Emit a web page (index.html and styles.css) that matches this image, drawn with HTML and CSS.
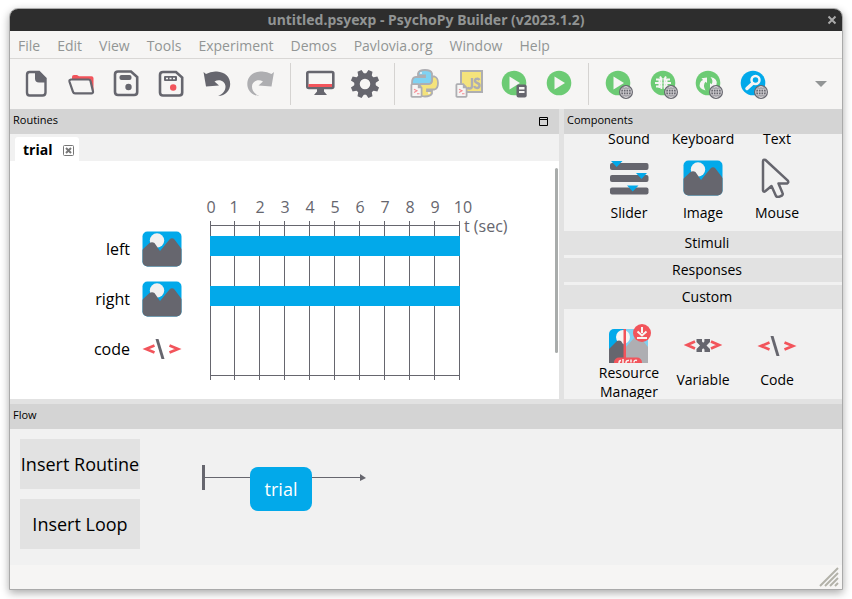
FILE: index.html
```html
<!DOCTYPE html>
<html lang="en">
<head>
<meta charset="utf-8">
<title>untitled.psyexp - PsychoPy Builder (v2023.1.2)</title>
<link rel="stylesheet" href="styles.css">
</head>
<body>
<svg class="defs" aria-hidden="true">
  <defs>
    <g id="globe">
      <circle r="7" fill="#66666e"/>
      <g fill="none" stroke="#d5d3d6" stroke-width="0.9"><circle r="5.4"/><ellipse rx="2.7" ry="5.4"/><path d="M0-5.4V5.4M-5.4 0H5.4M-4.5-2.8H4.5M-4.5 2.8H4.5"/></g>
    </g>
    <g id="script">
      <path d="M1.2 1.2h6l3.4 3.6v8.2q0 .8-.8.8H1.2q-.8 0-.8-.8V2q0-.8.8-.8z" fill="#f6f5f4" stroke="#aeaeb2" stroke-width="1.8"/>
      <path d="M6.8 1v4.2h4z" fill="#aeaeb2"/><path d="M3 6.2l3 1.6-3 1.6M6 10.8h2.5" fill="none" stroke="#f58b92" stroke-width="1.1"/>
    </g>
    <symbol id="image" viewBox="0 0 40 36">
      <clipPath id="frame"><rect x=".5" y=".5" width="39" height="35" rx="5"/></clipPath>
      <g clip-path="url(#frame)"><path fill="#02a9ea" d="M0 0h40v36H0z"/><circle cx="15" cy="9.500" r="7.200" fill="#f1f1f1"/><path fill="#66666e" d="M0 19L7.500 12q2.500-1.600 5 0l5.500 8L27.500 8.500q2.500-2.500 5 0L40 18.500V36H0z"/></g>
    </symbol>
    <symbol id="code" viewBox="0 0 40 24">
      <path d="M12.500 8.500L4 12l8.500 3.500M27.500 8.500L36 12l-8.500 3.500" fill="none" stroke="#f2545b" stroke-width="2.700"/>
      <path d="M13.500 2h3l6 20h-3z" fill="#66666e"/>
    </symbol>
  </defs>
</svg>
<main class="window">
  <header class="titlebar"><h1>untitled.psyexp - PsychoPy Builder (v2023.1.2)</h1><button class="close" aria-label="Close"><svg viewBox="0 0 10 10"><path d="M1.500 1.500l7 7m0-7l-7 7"/></svg></button></header>
  <nav class="menu"><button>File</button><button>Edit</button><button>View</button><button>Tools</button><button>Experiment</button><button>Demos</button><button>Pavlovia.org</button><button>Window</button><button>Help</button></nav>
  <div class="toolbar">
    <div class="tools">
      <button aria-label="New"><svg viewBox="0 0 45 50"><path d="M15.500 13h9.500l6.500 6.500v14q0 3-3 3h-13q-2.500 0-2.500-3v-17.500q0-3 2.500-3z" fill="none" stroke="#66666e" stroke-width="2.400"/><path d="M21 12.500h4.500l6.500 7v4h-7q-4 0-4-4z" fill="#66666e"/></svg></button>
      <button aria-label="Open"><svg viewBox="0 0 45 50"><path d="M13 20v-2q0-2 2-2h3l2 1.200h12.500q2 0 2 2V34L31 21z" fill="#f2545b"/><path d="M12 20.500h17.500q1.500 0 2 1.500l2.500 10.500q.2 1.800-1.500 1.800H16q-1.500 0-2-1.500l-3.500-10q-.5-2 1.500-2.300z" fill="#f6f5f4" stroke="#66666e" stroke-width="2.200"/></svg></button>
      <button aria-label="Save"><svg viewBox="0 0 45 50"><path d="M14 12.500h13l6.200 5.500v15q0 3-3 3H14q-3 0-3-3V15.500q0-3 3-3z" fill="none" stroke="#66666e" stroke-width="2.600"/><rect x="15.500" y="16" width="12" height="5" rx="2" fill="#66666e"/><circle cx="24.500" cy="28" r="3.200" fill="#66666e"/></svg></button>
      <button aria-label="Save as"><svg viewBox="0 0 45 50"><path d="M14 13h13l6.200 5.500v15q0 3-3 3H14q-3 0-3-3V16q0-3 3-3z" fill="none" stroke="#66666e" stroke-width="2.600"/><rect x="15" y="17" width="13" height="5" rx="1" fill="#66666e"/><path d="M17 19.500h2m1.500 0h2m1.500 0h2" stroke="#f6f5f4" stroke-width="1.600"/><circle cx="24.200" cy="28.500" r="3.200" fill="#f2545b"/></svg></button>
      <button aria-label="Undo"><svg viewBox="0 0 45 50"><path d="M9.500 13l2.500 2q5-3 11-2.500c8 .5 13.200 5.500 13.200 12.500 0 6-4.500 12-12.200 12 5-2 7.500-5.500 7.500-9.500 0-5-6-8-11-5l4.500 4-13 1z" fill="#66666e"/></svg></button>
      <button aria-label="Redo" disabled><svg viewBox="0 0 45 50"><path d="M35 13l-2.500 2q-5-3-11-2.500c-8 .5-13.200 5.500-13.200 12.500 0 6 4.500 12 12.200 12-5-2-7.500-5.500-7.500-9.500 0-5 6-8 11-5l-4.500 4 13 1z" fill="#aeaeb1"/></svg></button>
    </div>
    <div class="tools">
      <button aria-label="Monitor center"><svg viewBox="0 0 45 50"><rect x="9.300" y="13" width="26" height="16" rx="1.500" fill="#f6f5f4" stroke="#66666e" stroke-width="2.600"/><path d="M10.500 25h23.500v3H10.500z" fill="#f2545b"/><path d="M19 29h7v3.500l3 3.500H16l3-3.500z" fill="#66666e"/></svg></button>
      <button aria-label="Settings"><svg viewBox="0 0 45 50"><g transform="translate(22 25)"><circle r="8" fill="none" stroke="#66666e" stroke-width="5.500"/><g fill="#66666e"><path id="cog" d="M-3.200-9.500l1-4.800h4.400l1 4.800zM-3.200 9.500l1 4.800h4.400l1-4.800z" transform="rotate(22.500)"/><use href="#cog" transform="rotate(45)"/><use href="#cog" transform="rotate(90)"/><use href="#cog" transform="rotate(135)"/></g></g></svg></button>
    </div>
    <div class="tools">
      <button aria-label="Compile to Python" disabled><svg viewBox="0 0 45 50"><g stroke="#aeaeb2" stroke-width="1.800"><path d="M30 17.500h2.500q3.500 1 3.500 6.500t-3.500 6.500H25v1.500h5v2.500q-1.500 3-7 3t-7-3.500V29q0-4 4-4h6q4 0 4-4z" fill="#f4e37c"/><path d="M16 18.500v-4q1-3.500 7-3.500t7 3.500V21q0 4-4 4h-6q-4 0-4 4v1.500h-2.500Q10 30 10 24t4-6h9v-1.500h-7z" fill="#7fd2f2"/></g><circle cx="19" cy="14" r="1" fill="#f6f5f4"/><circle cx="27" cy="34" r="1" fill="#f6f5f4"/><use href="#script" x="9" y="24"/></svg></button>
      <button aria-label="Compile to JS" disabled><svg viewBox="0 0 45 50"><rect x="14" y="12" width="21" height="21" fill="#f4e37c" stroke="#aeaeb2" stroke-width="2"/><path d="M25 19v8q0 2.500-2.500 2.500-1.500 0-2.200-1M32.500 21q-1-1.500-2.500-1.200-2 .2-2 2 0 1.500 2.300 2.200 2.400.8 2.200 2.800-.2 2-2.500 2.200-2 0-3-1.800" fill="none" stroke="#aeaeb2" stroke-width="2.400"/><use href="#script" x="9" y="24"/></svg></button>
      <button aria-label="Send to runner"><svg viewBox="0 0 45 50"><circle cx="22" cy="24" r="12.300" fill="#6ccb74"/><path d="M17.500 17.500L28 24l-10.500 6.500z" fill="#f6f5f4"/><rect x="24.500" y="25.500" width="10.200" height="13" rx="2" fill="#66666e"/><path d="M27 28h5.500v2.500H27zM27 32h5.500v2H27z" fill="#f6f5f4"/></svg></button>
      <button aria-label="Run"><svg viewBox="0 0 45 50"><circle cx="22" cy="24" r="12.300" fill="#6ccb74"/><path d="M17.500 17.500L28 24l-10.500 6.500z" fill="#f6f5f4"/></svg></button>
    </div>
    <div class="tools">
      <button aria-label="Run online"><svg viewBox="0 0 45 50"><circle cx="22" cy="24" r="12.300" fill="#6ccb74"/><path d="M17.500 17.500L28 24l-10.500 6.500z" fill="#f6f5f4"/><use href="#globe" x="30" y="33"/></svg></button>
      <button aria-label="Debug online"><svg viewBox="0 0 45 50"><circle cx="22" cy="24" r="12.300" fill="#6ccb74"/><g fill="none" stroke="#f6f5f4" stroke-width="2"><path d="M15 20.500h14M14 24h16M15 27.500h14M19 17.500l1.500 2.500v10M25 17.500L23.500 20v10"/><path d="M18.500 20v9M25.500 20v9"/></g><path d="M22 20v12" stroke="#6ccb74"/><use href="#globe" x="30" y="33"/></svg></button>
      <button aria-label="Sync"><svg viewBox="0 0 45 50"><circle cx="22" cy="24" r="12.300" fill="#6ccb74"/><path d="M19.500 31.500q-7.500-2-5.500-7.500 1-2.500 3-3l-1.500-1.800 5.500-.7v5.500l-1.500-1.300q-3 3.300 0 8.800zM24.500 18q7.500 1.500 6 7.500-.8 2.500-3 4h-3.500v-5.500l1.500 1.300q2.300-3.300-1-7.300z" fill="#f6f5f4"/><use href="#globe" x="30" y="33"/></svg></button>
      <button aria-label="Search Pavlovia"><svg viewBox="0 0 45 50"><circle cx="22" cy="24" r="12.300" fill="#02a9ea"/><circle cx="24.500" cy="21" r="4" fill="none" stroke="#f6f5f4" stroke-width="2.500"/><path d="M21.500 24.500L16 29.500" stroke="#f6f5f4" stroke-width="3.500" stroke-linecap="round"/><use href="#globe" x="30" y="33"/></svg></button>
    </div>
    <button class="more" aria-label="More tools"><svg viewBox="0 0 12 6"><path d="M0 0h12L6 6z"/></svg></button>
  </div>
  <div class="panes">
    <section class="routines">
      <h2 class="caption">Routines<button aria-label="Maximize"><svg viewBox="0 0 9 9"><path d="M.5.5h8v8h-8zM0 2.500h9"/></svg></button></h2>
      <div class="tabs"><div class="tab"><span>trial</span><button aria-label="Close tab"><svg viewBox="0 0 11 11"><rect x=".5" y=".5" width="10" height="10" rx="1"/><path d="M3 3l5 5m0-5L3 8" stroke-width="2"/></svg></button></div></div>
      <div class="canvas">
        <ul class="rows">
          <li>left<svg class="picture"><use href="#image"/></svg></li>
          <li>right<svg class="picture"><use href="#image"/></svg></li>
          <li>code<svg class="markup"><use href="#code"/></svg></li>
        </ul>
        <svg class="timeline" viewBox="0 0 320 190" role="img" aria-label="Timeline in seconds">
          <path d="M10.500 31v159M34.500 31v159M59.500 31v159M84.500 31v159M109.500 31v159M134.500 31v159M159.500 31v159M184.500 31v159M209.500 31v159M234.500 31v159M259.500 31v159M10 35.500h250M10 185.500h250"/>
          <rect x="10" y="46" width="250" height="20"/><rect x="10" y="96" width="250" height="20"/>
          <g class="ticks"><text x="11" y="23">0</text><text x="34" y="23">1</text><text x="60" y="23">2</text><text x="85" y="23">3</text><text x="110" y="23">4</text><text x="135" y="23">5</text><text x="160" y="23">6</text><text x="185" y="23">7</text><text x="210" y="23">8</text><text x="235" y="23">9</text><text x="263" y="23">10</text></g>
          <text x="264" y="42">t (sec)</text>
        </svg>
        <div class="scrollbar"></div>
      </div>
    </section>
    <section class="components">
      <h2 class="caption">Components</h2>
      <div class="row clipped"><button>Sound</button><button>Keyboard</button><button>Text</button></div>
      <div class="row">
        <button><svg viewBox="0 0 40 40"><g fill="#66666e"><rect x="1" y="5" width="38.500" height="7" rx="2"/><rect x="1" y="17" width="38.500" height="7" rx="2"/><rect x="1" y="29.500" width="38.500" height="7" rx="2"/></g><path d="M2 3h11.500L7.700 9zM27 15h11l-5.500 6zM18 27.500h11.500l-5.800 6z" fill="#02a9ea"/></svg>Slider</button>
        <button><svg><use href="#image" y="2" width="40" height="36"/></svg>Image</button>
        <button><svg viewBox="0 0 40 40"><path d="M8.500 2q-2.500-1.200-2.500 1.500v29q.5 2 2.500.5l6-5 4.500 10q1 1.500 3 .8l3-1.300q1.200-1 .5-2.500L21.500 25.500h8.500q2-.8.8-2.800z" fill="none" stroke="#66666e" stroke-width="2.500" stroke-linejoin="round"/></svg>Mouse</button>
      </div>
      <button class="category">Stimuli</button>
      <button class="category">Responses</button>
      <button class="category">Custom</button>
      <div class="row custom">
        <button class="resource"><svg viewBox="-2 0 44 40"><clipPath id="resource"><rect y="6" width="39" height="40" rx="5"/></clipPath><g clip-path="url(#resource)"><path fill="#02a9ea" d="M0 5h16v35H0z"/><path fill="#7fd2f2" d="M16 5h24v35H16z"/><circle cx="14" cy="14" r="7" fill="#f6f5f4"/><path fill="#66666e" d="M0 26L8 18q2-1 4 0l4 6v16H0z"/><path fill="#aeaeb2" d="M16 25l10-11q2-2 5 0l8 10v16H16z"/></g><path d="M14.500 6h2.500v31h-2.500z" fill="#f2545b"/><rect x="5" y="34.500" width="28" height="12" rx="5" fill="#f2545b"/><path d="M10 40q0-2.500 2-2.500m2-1.500v4m3 0q0-3 3-2.500m2-1v3m3 0q0-3 3-2" fill="none" stroke="#f6f5f4" stroke-width="1.500"/><circle cx="33" cy="10" r="9" fill="#f2545b"/><path d="M33 4v6m-4.500-1.500l4.500 4 4.500-4M28 15h10" fill="none" stroke="#f6f5f4" stroke-width="2"/></svg>Resource Manager</button>
        <button><svg viewBox="0 0 40 40"><path d="M12 15.500L4 19l8 3.500M28 15.500L36 19l-8 3.500" fill="none" stroke="#f2545b" stroke-width="2.700"/><path d="M13.500 13h5.500v2.500l1.200 1.200 1.200-1.200V13H27v3L23.500 19.500 27 23v3h-5.500v-2.500l-1.300-1.200-1.200 1.200V26h-5.500v-3l3.500-3.500-3.500-3.500z" fill="#66666e"/></svg>Variable</button>
        <button><svg><use href="#code" y="8" width="40" height="24"/></svg>Code</button>
      </div>
    </section>
  </div>
  <section class="flow">
    <h2 class="caption">Flow</h2>
    <div class="flow-body">
      <div class="inserts"><button>Insert Routine</button><button>Insert Loop</button></div>
      <div class="track"><i class="start"></i><i class="line lead"></i><button class="routine">trial</button><i class="line tail"></i><i class="arrow"></i></div>
    </div>
  </section>
  <footer><svg viewBox="0 0 20 20"><path d="M1 19L19 1M6 19L19 6M11 19l8-8M16 19l3-3"/></svg></footer>
</main>
</body>
</html>
```
FILE: styles.css
```css
* { box-sizing: border-box; }
body {
  margin: 0;
  padding: 8px 9px 9px;
  height: 100vh;
  background: #fff;
  color: #000;
  font: 14px/20px "Open Sans", "Noto Sans", sans-serif;
  overflow: hidden;
}
button { margin: 0; padding: 0; border: 0; background: none; color: inherit; font: inherit; }
svg { display: block; }
.defs { position: absolute; width: 0; height: 0; }
.window {
  height: 100%;
  display: flex;
  flex-direction: column;
  border: 1px solid #aaa;
  border-radius: 9px 9px 0 0;
  background: #f6f5f4;
  box-shadow: 0 3px 9px #0005;
  overflow: hidden;
}
.titlebar { height: 22px; flex: none; display: flex; align-items: center; background: #2d2d2d; color: #919494; padding: 0 5px 0 15px; }
h1 { flex: 1; margin: 0; text-align: center; font: bold 14px/22px "Noto Sans", sans-serif; }
.close svg { width: 10px; height: 10px; fill: none; stroke: #aaa; stroke-width: 2; }
.menu { height: 28px; flex: none; display: flex; gap: 17px; padding: 2px 8px 0; border-bottom: 1px solid #d9d7d5; color: #929595; }
.toolbar { height: 50px; flex: none; display: flex; padding: 0 15px 0 4px; }
.tools { display: flex; }
.tools button, .tools svg { width: 45px; height: 50px; }
.tools + .tools::before { content: ""; width: 1px; height: 42px; margin: 4px 7px 4px 6px; background: #d5d3d1; }
.more { margin-left: auto; }
.more svg { width: 12px; height: 6px; fill: #929595; }
.panes { flex: 1; min-height: 0; display: grid; grid-template-columns: minmax(0, 549fr) minmax(0, 278fr); gap: 5px; background: #e2e2e2; }
.routines, .components { min-height: 0; display: flex; flex-direction: column; background: #f1f1f1; overflow: hidden; }
.caption { height: 25px; flex: none; margin: 0; padding: 0 11px 3px 3px; display: flex; align-items: center; justify-content: space-between; background: #d4d4d4; font-size: 11px; font-weight: normal; }
.caption svg { width: 9px; height: 9px; margin-top: 2px; fill: none; stroke: #000; }
.tabs { height: 27px; flex: none; padding: 3px 5px 0; }
.tab { width: 64px; height: 24px; display: flex; align-items: center; justify-content: space-between; padding: 2px 5px 0 8px; border-radius: 3px 3px 0 0; background: #fff; font-weight: bold; }
.tab svg { width: 11px; height: 11px; fill: none; stroke: #777; }
.canvas { flex: 1; min-height: 0; display: flex; padding: 7px 1px 0 0; background: #fff; }
.rows { width: 172px; margin: 0; padding: 56px 0 0; list-style: none; font-size: 16px; }
.rows li { height: 50px; display: flex; align-items: center; justify-content: flex-end; gap: 12px; }
.picture { width: 40px; height: 36px; }
.markup { width: 40px; height: 24px; }
.timeline { width: 320px; height: 190px; margin: 22px 0 0 18px; font-size: 16px; }
.timeline path { fill: none; stroke: #66666e; }
.timeline rect { fill: #02a9ea; }
.timeline text { fill: #66666e; }
.ticks { text-anchor: middle; }
.scrollbar { width: 3px; height: 185px; margin-left: auto; border-radius: 2px; background: #a9acab; }
.row { display: grid; grid-template-columns: repeat(3, 74px); justify-content: center; height: 83px; padding-top: 10px; flex: none; line-height: 19px; }
.row button { display: flex; flex-direction: column; align-items: center; gap: 5px; }
.row.clipped { height: 14px; padding: 0; align-content: end; overflow: hidden; }
.row svg { width: 40px; height: 40px; }
.category { height: 24px; flex: none; margin-bottom: 3px; padding-left: 8px; background: #e2e2e2; }
.row.custom { height: auto; padding: 14px 0 0; margin-top: -3px; }
.custom button { padding-top: 3px; gap: 4px; }
.custom .resource { gap: 0; padding-top: 0; }
.resource svg { width: 44px; height: 40px; }
.flow .caption { margin-top: 5px; }
.flow { flex: none; background: #e2e2e2; }
.flow-body { height: 136px; display: flex; gap: 62px; padding: 10px; background: #f1f1f1; }
.inserts { display: flex; flex-direction: column; gap: 10px; font-size: 18px; }
.inserts button { width: 120px; height: 50px; background: #e2e2e2; white-space: nowrap; }
.track { display: flex; height: 100px; }
.start { width: 3px; height: 25px; margin-top: 26px; background: #66666e; }
.line { height: 1px; margin-top: 38px; background: #66666e; }
.lead { width: 45px; }
.tail { width: 48px; }
.routine { width: 62px; height: 44px; margin-top: 28px; border-radius: 8px; background: #02a9ea; color: #fff; font-size: 18px; }
.arrow { margin-top: 35px; height: 7px; border-left: 6px solid #66666e; border-top: 4px solid transparent; border-bottom: 3px solid transparent; }
footer { height: 24px; flex: none; display: flex; justify-content: flex-end; padding: 2px 3px; }
footer svg { width: 20px; height: 20px; fill: none; stroke: #b3b2a9; stroke-width: 2; }
```
